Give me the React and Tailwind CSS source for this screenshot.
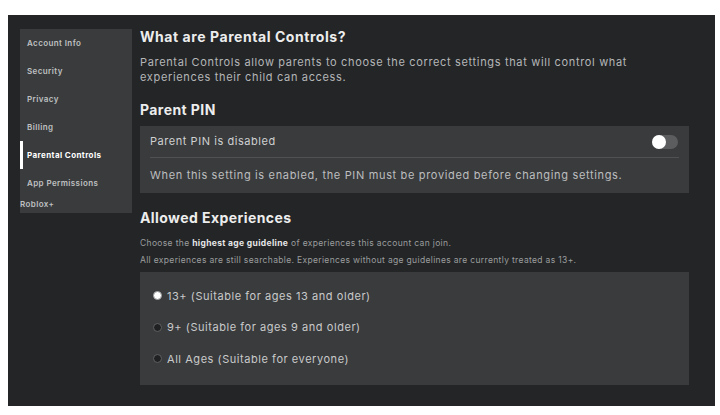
import React, { useState } from 'react';

const navItems = ['Account Info', 'Security', 'Privacy', 'Billing', 'Parental Controls', 'App Permissions'];

const ageOptions = [
  { id: '13', label: '13+ (Suitable for ages 13 and older)' },
  { id: '9', label: '9+ (Suitable for ages 9 and older)' },
  { id: 'all', label: 'All Ages (Suitable for everyone)' },
];

const App = () => {
  const [pinEnabled, setPinEnabled] = useState(false);
  const [age, setAge] = useState('13');

  return (
    <div className="min-h-screen bg-white pt-[15px] pl-[8px]" style={{ fontFamily: 'Inter, "Noto Sans", sans-serif' }}>
      <div className="w-[707px] h-[391px] bg-[#232527] flex pl-[12px] pt-[14px] pr-[26px]">
        {/* sidebar */}
        <div className="w-[112px] h-[184px] bg-[#393b3d] flex flex-col shrink-0">
          {navItems.map((item) => (
            <div
              key={item}
              className={`h-[28px] flex items-center text-[8px] tracking-[0.05em] ${
                item === 'Parental Controls'
                  ? 'border-l-[3px] border-white pl-[4px] font-bold text-white'
                  : 'pl-[7px] font-semibold text-[#bfc0c1]'
              }`}
            >
              {item}
            </div>
          ))}
          <div className="h-[14px] flex items-center text-[8px] tracking-[0.05em] font-semibold text-[#bfc0c1]">Roblox+</div>
        </div>

        {/* main */}
        <div className="ml-[8px] flex-1 flex flex-col">
          <h1 className="text-[14px] leading-[16px] font-bold tracking-[0.04em] text-[#ededed]">What are Parental Controls?</h1>
          <p className="mt-[10px] max-w-[500px] text-[11px] leading-[15px] tracking-[0.06em] text-[#b5b6b7]">
            Parental Controls allow parents to choose the correct settings that will control what experiences their child can access.
          </p>

          <h2 className="mt-[16px] text-[14px] leading-[18px] font-bold tracking-[0.03em] text-[#ededed]">Parent PIN</h2>
          <div className="mt-[7px] bg-[#393b3d] h-[67px] flex flex-col">
            <div className="h-[31px] flex items-center justify-between pl-[10px] pr-[11px]">
              <span className="text-[11px] tracking-[0.05em] text-[#cfd0d0]">Parent PIN is disabled</span>
              <button
                onClick={() => setPinEnabled(!pinEnabled)}
                className={`w-[26px] h-[14px] rounded-full flex items-center ${pinEnabled ? 'bg-[#00b06f] justify-end' : 'bg-[#5b5d5f] justify-start'}`}
              >
                <span className="w-[14px] h-[14px] rounded-full bg-white" />
              </button>
            </div>
            <div className="mx-[10px] h-px bg-[#4f5153]" />
            <div className="flex-1 flex items-center pl-[10px]">
              <span className="text-[11px] tracking-[0.06em] text-[#bdbebf]">
                When this setting is enabled, the PIN must be provided before changing settings.
              </span>
            </div>
          </div>

          <h2 className="mt-[16px] text-[14px] leading-[18px] font-bold tracking-[0.03em] text-[#ededed]">Allowed Experiences</h2>
          <p className="mt-[8px] text-[8.5px] leading-[17px] tracking-[0.04em] text-[#9c9d9e]">
            Choose the <span className="font-bold text-[#e6e6e6]">highest age guideline</span> of experiences this account can join.
          </p>
          <p className="text-[8.5px] leading-[17px] tracking-[0.04em] text-[#9c9d9e]">
            All experiences are still searchable. Experiences without age guidelines are currently treated as 13+.
          </p>

          <div className="mt-[3px] bg-[#393b3d] h-[113px] pt-[8px] pl-[13px] flex flex-col">
            {ageOptions.map((opt) => (
              <button
                key={opt.id}
                onClick={() => setAge(opt.id)}
                className="h-[31.5px] flex items-center gap-[5px] text-left"
              >
                <span
                  className={`w-[9px] h-[9px] rounded-full border ${
                    age === opt.id ? 'bg-white border-[#9a9b9c]' : 'bg-[#1f2123] border-[#5e6062]'
                  }`}
                />
                <span className="text-[11px] tracking-[0.05em] text-[#c9caca]">{opt.label}</span>
              </button>
            ))}
          </div>
        </div>
      </div>
    </div>
  );
};

export default App;
